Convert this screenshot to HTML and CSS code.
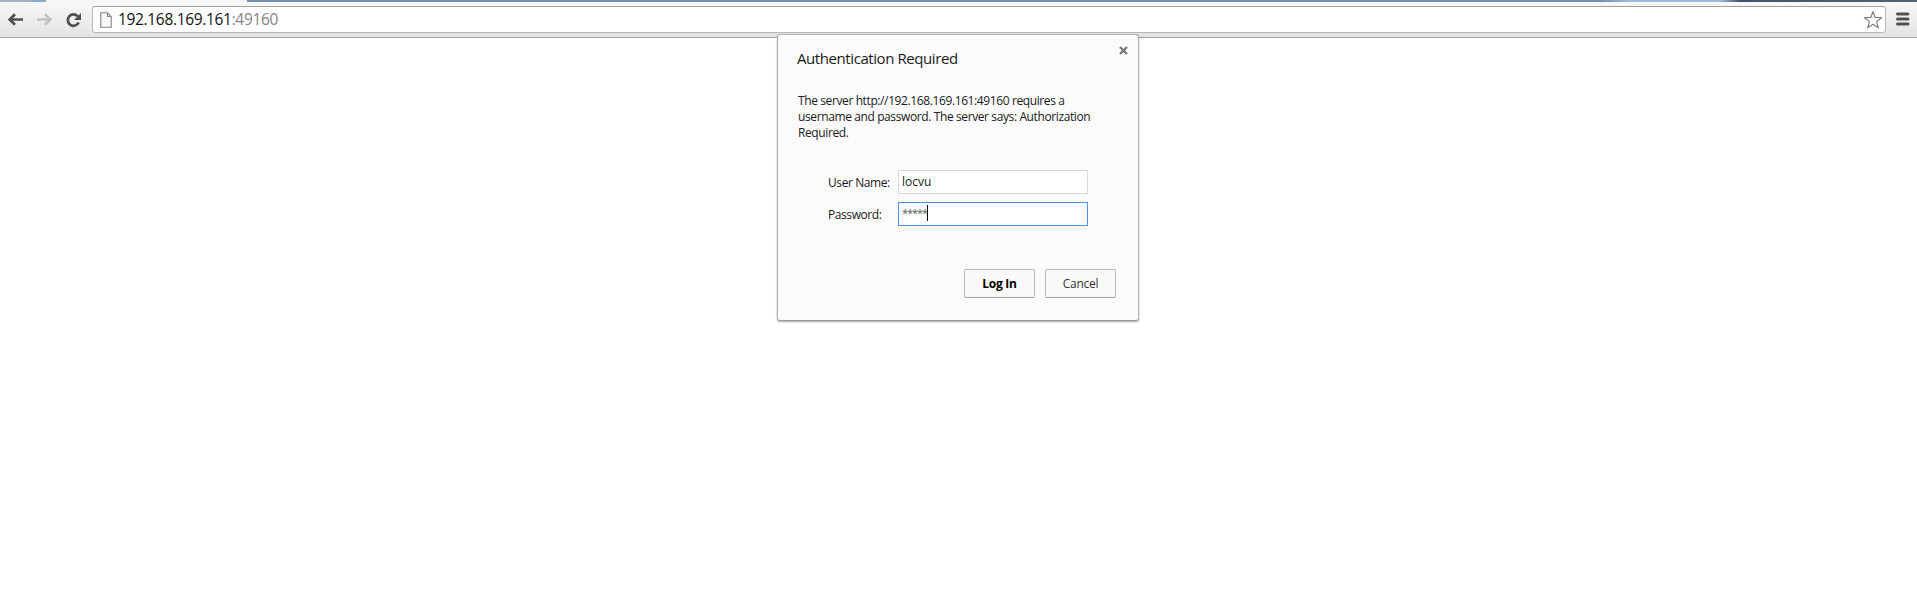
FILE: index.html
```html
<!DOCTYPE html>
<html lang="en">
<head>
<meta charset="utf-8">
<title>192.168.169.161:49160</title>
<link rel="stylesheet" href="styles.css">
</head>
<body>
<div class="tabstrip"><span class="tab-back"></span><span class="tab-active"></span></div>
<header class="toolbar">
  <svg class="nav" width="90" height="34" viewBox="0 0 90 34">
    <g fill="none" stroke-width="2.7">
      <path d="M23 16.5H9.500M15 11.300L9.700 16.500L15 21.700" stroke="#505050"/>
      <path d="M37 16.500H50.500M45 11.300L50.300 16.500L45 21.700" stroke="#c3c3c3"/>
      <path d="M78 13.500A5.700 5.700 0 1 0 78.700 19.500" stroke="#505050"/>
    </g>
    <path d="M81 10V17H74Z" fill="#505050"/>
  </svg>
  <div class="omnibox">
    <svg class="page" width="12" height="16" viewBox="0 0 12 16"><path d="M.8.800H7.500L11.200 4.500V15.200H.8ZM7.500.800V4.500H11.200" fill="#f8f8f8" stroke="#858585" stroke-width="1.100"/></svg>
    <span class="url">192.168.169.161<span class="port">:49160</span></span>
    <svg class="star" width="20" height="20" viewBox="0 0 20 20"><path d="M10 1.500L12.200 7.500L18.600 7.700L13.600 11.600L15.300 17.800L10 14.300L4.700 17.800L6.400 11.600L1.400 7.700L7.800 7.500Z" fill="#fff" stroke="#808080" stroke-width="1.200" stroke-linejoin="round"/></svg>
  </div>
  <svg class="menu" width="14" height="14" viewBox="0 0 14 14"><path d="M1.500 2H12M1.500 7H12M1.500 12H12" stroke="#505050" stroke-width="3" stroke-linecap="round"/></svg>
</header>
<section class="dialog" role="dialog">
  <svg class="close" width="9" height="9" viewBox="0 0 9 9"><path d="M1 1L8 8M8 1L1 8" stroke="#777" stroke-width="2.300"/></svg>
  <h1 class="title">Authentication Required</h1>
  <p class="message"><span class="l1">The server http://192.168.169.161:49160 requires a</span><br><span class="l2">username and password. The server says: Authorization</span><br><span class="l3">Required.</span></p>
  <div class="form">
    <span class="label name">User Name:</span><div class="field"><span class="value">locvu</span></div>
    <span class="label pass">Password:</span><div class="field focused"><span class="stars">*****</span><span class="caret"></span></div>
  </div>
  <div class="actions"><button class="button primary"><span>Log In</span></button><button class="button"><span>Cancel</span></button></div>
</section>
</body>
</html>
```
FILE: styles.css
```css
* { box-sizing: border-box; }
body { margin: 0; height: 616px; overflow: hidden; background: #fff; font-family: "Open Sans", "Noto Sans", sans-serif; font-size: 12px; color: #1a1a1a; }
.tabstrip { height: 2px; display: flex; background: linear-gradient(90deg, #7590b2 0 1600px, #9bbce0 1630px 1720px, #43546a 1740px, #56636f 1917px); }
.tab-back { width: 46px; background: linear-gradient(90deg, #a9b3bd 0 30px, #8ba9c9 34px); }
.tab-active { width: 201px; background: #f6f6f6; }
.toolbar { height: 36px; display: flex; background: linear-gradient(#f8f8f8, #e3e3e3); border-bottom: 1px solid #a6a6a6; }
.nav { margin-top: 1px; }
.omnibox { width: 1794px; height: 27px; margin: 4px 0 0 2px; border: 1px solid #b8b8b8; border-top-color: #a0a0a0; border-radius: 3px; background: #fff; display: flex; align-items: center; padding: 0 2px 0 7px; }
.page { margin-right: 6px; }
.url { font-size: 15.5px; line-height: 24px; padding-bottom: 2px; color: #111; white-space: nowrap; letter-spacing: -.33px; }
.port { color: #858585; }
.star { margin-left: auto; }
.menu { margin: 10px 0 0 10px; }
.dialog { position: absolute; left: 777px; top: 34px; width: 362px; height: 287px; background: #fbfbfb; border: 1px solid #b3b3b3; border-bottom-color: #999; border-radius: 3px; box-shadow: 0 1px 2px rgba(0, 0, 0, .35); padding: 13px 22px 0 19px; }
.close { position: absolute; right: 10px; top: 11px; }
.title { margin: 0; font-weight: 400; font-size: 15px; line-height: 20px; letter-spacing: -.42px; white-space: nowrap; }
.message { margin: 25px 0 0 1px; line-height: 16px; white-space: nowrap; letter-spacing: -.39px; }
.form { display: grid; grid-template-columns: 70px 190px; row-gap: 8px; margin: 29px 0 0 31px; }
.label { height: 24px; line-height: 25px; letter-spacing: -.42px; white-space: nowrap; }
.field { height: 24px; border: 1px solid #d9d9d9; background: #fff; padding-left: 3px; line-height: 22px; display: flex; }
.focused { border-color: #4d90fe; }
.stars { color: #555; font-size: 11px; letter-spacing: -1.050px; line-height: 20px; }
.caret { width: 1px; height: 16px; margin-top: 2px; background: #000; }
.actions { display: flex; justify-content: flex-end; gap: 10px; margin-top: 43px; }
.button { width: 71px; height: 29px; padding: 0; border: 1px solid #b8b8b8; border-bottom-color: #a0a0a0; border-radius: 2px; background: #fafafa; font: 12px/27px "Open Sans", "Noto Sans", sans-serif; letter-spacing: -.3px; color: #333; }
.primary { font-weight: 700; color: #000; letter-spacing: -.25px; }
```
